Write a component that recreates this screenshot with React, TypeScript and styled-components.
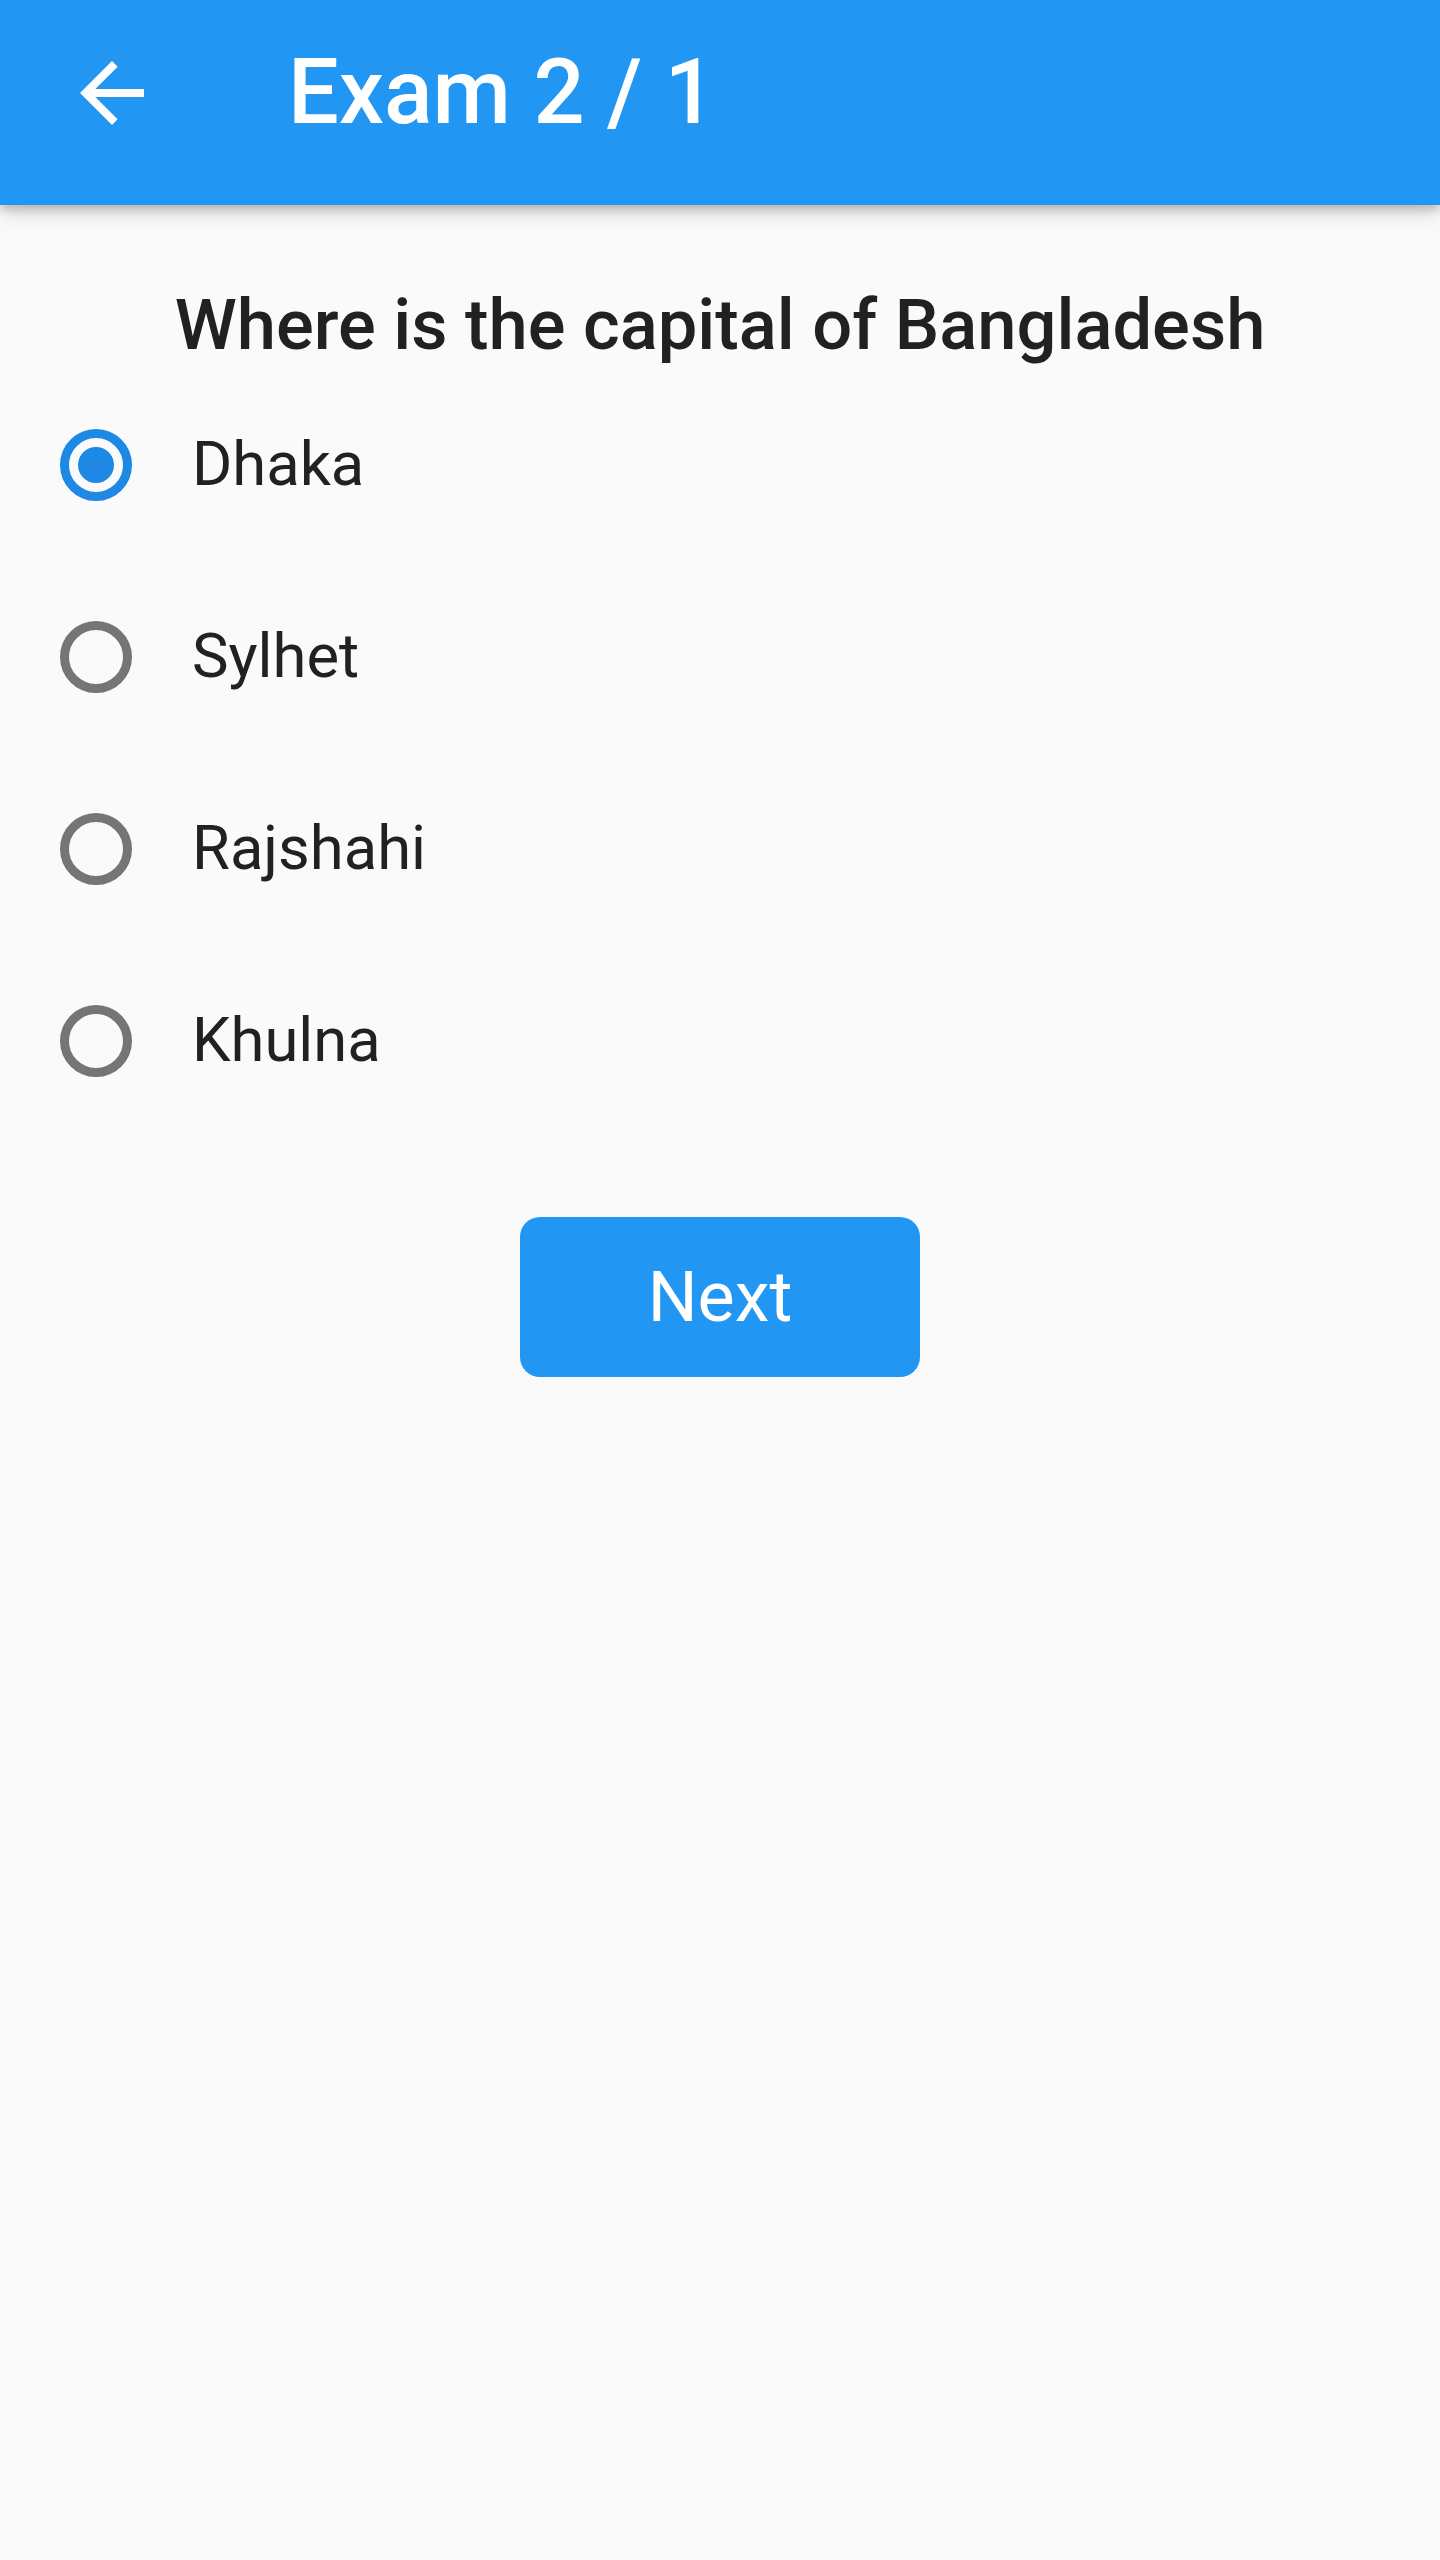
import React, { useState } from "react";
import styled, { createGlobalStyle } from "styled-components";

const GlobalStyle = createGlobalStyle`
  html, body {
    margin: 0;
    padding: 0;
    background: #fafafa;
    font-family: Roboto, "Noto Sans", "Liberation Sans", sans-serif;
  }
  * { box-sizing: border-box; }
`;

const Page = styled.div`
  width: 1440px;
  min-height: 2560px;
  background: #fafafa;
  display: flex;
  flex-direction: column;
`;

const AppBar = styled.header`
  height: 205px;
  background: #2196f3;
  display: flex;
  align-items: flex-start;
  padding: 45px 0 0 64px;
  gap: 128px;
  box-shadow: 0 4px 10px rgba(0, 0, 0, 0.22), 0 8px 22px rgba(0, 0, 0, 0.12);
  position: relative;
  z-index: 1;
`;

const BackButton = styled.button`
  width: 96px;
  height: 96px;
  padding: 0;
  border: none;
  background: transparent;
  display: flex;
  align-items: center;
  justify-content: center;
  cursor: pointer;
`;

const Title = styled.h1`
  margin: 0;
  height: 96px;
  display: flex;
  align-items: center;
  color: #ffffff;
  font-size: 90px;
  font-weight: 500;
  line-height: 1;
  letter-spacing: 0;
`;

const Body = styled.main`
  display: flex;
  flex-direction: column;
  padding-top: 78px;
`;

const Question = styled.h2`
  margin: 0;
  text-align: center;
  color: #212121;
  font-size: 70.5px;
  font-weight: 500;
  line-height: 84px;
`;

const Options = styled.div`
  display: flex;
  flex-direction: column;
  margin-top: 2px;
`;

const OptionRow = styled.label`
  height: 192px;
  display: flex;
  align-items: center;
  padding-left: 60px;
  gap: 60px;
  cursor: pointer;
`;

const RadioRing = styled.span<{ $checked: boolean }>`
  width: 72px;
  height: 72px;
  border-radius: 50%;
  border: 9px solid ${(p) => (p.$checked ? "#1e88e5" : "#757575")};
  display: flex;
  align-items: center;
  justify-content: center;
  flex-shrink: 0;
`;

const RadioDot = styled.span`
  width: 36px;
  height: 36px;
  border-radius: 50%;
  background: #1e88e5;
`;

const OptionText = styled.span`
  color: #212121;
  font-size: 61.5px;
  font-weight: 400;
  line-height: 1.2;
`;

const ButtonWrap = styled.div`
  display: flex;
  justify-content: center;
  margin-top: 80px;
`;

const NextButton = styled.button`
  width: 400px;
  height: 160px;
  border: none;
  border-radius: 20px;
  background: #2196f3;
  color: #ffffff;
  font-family: Roboto, "Noto Sans", "Liberation Sans", sans-serif;
  font-size: 70px;
  font-weight: 400;
  cursor: pointer;
`;

const options = ["Dhaka", "Sylhet", "Rajshahi", "Khulna"];

export default function App() {
  const [selected, setSelected] = useState(0);
  return (
    <>
      <GlobalStyle />
      <Page>
        <AppBar>
          <BackButton aria-label="Back">
            <svg width="96" height="96" viewBox="0 0 24 24" fill="#ffffff">
              <path d="M20 11H7.83l5.59-5.59L12 4l-8 8 8 8 1.41-1.41L7.83 13H20v-2z" />
            </svg>
          </BackButton>
          <Title>Exam 2 / 1</Title>
        </AppBar>
        <Body>
          <Question>Where is the capital of Bangladesh</Question>
          <Options>
            {options.map((o, i) => (
              <OptionRow key={o} onClick={() => setSelected(i)}>
                <RadioRing $checked={selected === i}>
                  {selected === i && <RadioDot />}
                </RadioRing>
                <OptionText>{o}</OptionText>
              </OptionRow>
            ))}
          </Options>
          <ButtonWrap>
            <NextButton>Next</NextButton>
          </ButtonWrap>
        </Body>
      </Page>
    </>
  );
}
